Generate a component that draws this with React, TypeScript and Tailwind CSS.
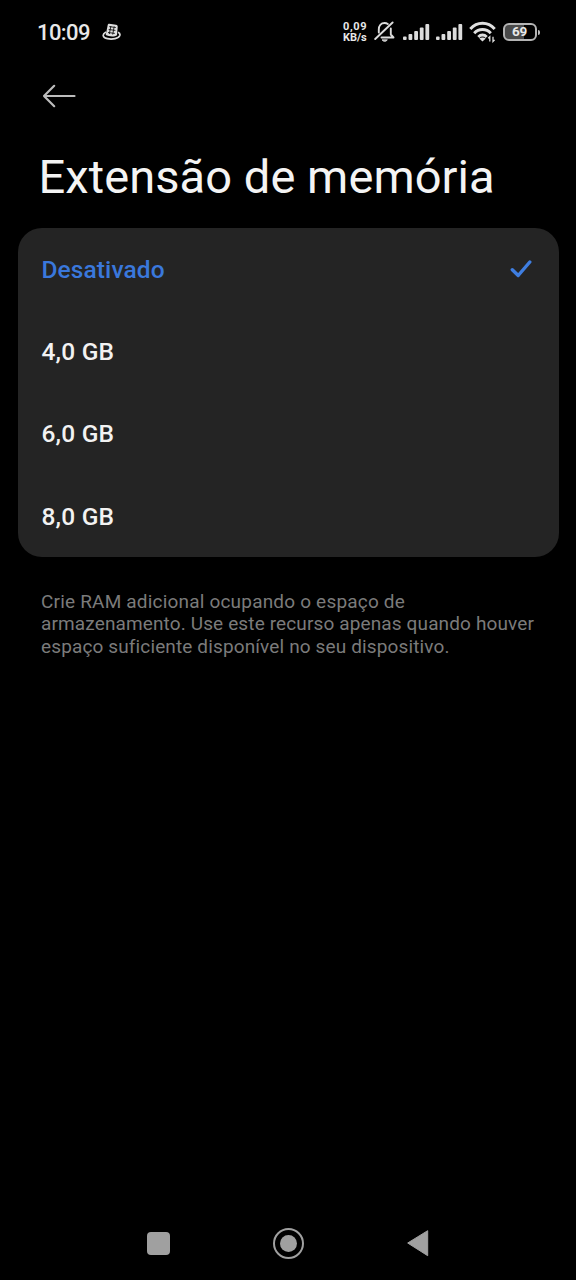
const OPTIONS = ["Desativado", "4,0 GB", "6,0 GB", "8,0 GB"];

function Signal() {
  return (
    <svg width="27" height="18" viewBox="0 0 27 18" fill="#dcdcdc">
      <rect x="0" y="13.500" width="3.600" height="3.500" rx="1" />
      <rect x="5.500" y="11" width="3.800" height="6" rx="1" />
      <rect x="11.200" y="8" width="3.800" height="9" rx="1" />
      <rect x="16.800" y="4.600" width="3.800" height="12.400" rx="1" />
      <rect x="22.400" y="1" width="3.800" height="16" rx="1" />
    </svg>
  );
}

function StatusBar() {
  return (
    <header className="flex h-16 items-center pl-[37px] text-[#e8e8e8]">
      <span className="w-[65px] pt-px text-[22px] leading-none font-medium tracking-[-0.6px]">10:09</span>
      <svg width="19" height="18" viewBox="0 0 19 18" fill="none">
        <path d="M4 9C-.3 11.500.5 14.600 5.500 15.700c5 1 11.200-.2 12.300-3.200.5-1.600-.3-2.700-1.800-3.300" stroke="#dedede" strokeWidth="1.700" />
        <path d="M7.300.8 14 1.800c1.300.3 1.900 1.200 1.700 2.400L15 12.300c-2.300 1.900-8.300 1.500-11.300-.2L5.700 2c.2-.8.700-1.200 1.600-1.200Z" fill="#dedede" />
        <path d="m7.300 3.600 6.500.9M6.700 6.500l6.700.9M6 9.500l6.800.9M8.900 3 7.300 11M12.200 3.500l-1.500 8" stroke="#111" strokeWidth="0.900" />
      </svg>
      <div className="ml-auto flex w-[233px] items-center">
        <div className="w-[31px] text-[11px] leading-[11px] font-bold">
          <div className="tracking-[0.6px]">0,09</div>
          <div>KB/s</div>
        </div>
        <svg width="22" height="24" viewBox="0 0 22 24" fill="none" stroke="#dcdcdc" strokeWidth="1.900" strokeLinecap="round" strokeLinejoin="round">
          <path d="M13.800 4C12.800 3.300 11.800 3 10.600 3 7 3 4.800 5.800 4.800 9.500V12.500M7.500 17.500H19.500l-2.700-3V8.500M18.600 2.500 1.200 19" />
          <path d="M8.300 20.200c.9 1.500 3.900 1.500 4.800 0Z" fill="#dcdcdc" strokeWidth="1" />
        </svg>
        <div className="ml-[7px] flex gap-[5.500px]">
          <Signal />
          <Signal />
        </div>
        <svg className="ml-[6px]" width="28" height="22" viewBox="0 0 28 22" fill="none" stroke="#e0e0e0" strokeWidth="2.900">
          <path d="M1.300 8C8 .3 19 .3 25.700 8M5.200 12.200c4.600-5 12-5 16.600 0M9.300 15.900c2.400-2.500 6-2.500 8.400 0" />
          <path d="m13.500 20.500-3.200-3c1.700-1.500 4.700-1.500 6.400 0Z" fill="#e0e0e0" stroke="none" />
          <path d="M20.800 20.500v-4.800l-1.600 1.600M24 15.700v4.800l1.600-1.600" strokeWidth="1.300" />
        </svg>
        <div className="ml-[6px] flex h-[18px] w-[34px] items-center justify-center rounded-[6px] border-2 border-[#b4b4b4] bg-linear-to-r from-[#4a4a4a] from-65% to-black to-65% text-[13.500px] leading-none font-bold tracking-[-0.3px]">
          69
        </div>
        <div className="ml-px h-[5px] w-[2px] rounded-r-sm bg-[#bdbdbd]" />
      </div>
    </header>
  );
}

export default function App() {
  return (
    <div className="flex h-[1280px] w-[576px] flex-col overflow-hidden bg-black font-['Roboto',sans-serif]">
      <StatusBar />
      <button aria-label="Voltar" className="flex h-16 items-center pl-[42px]">
        <svg width="34" height="24" viewBox="0 0 34 24" fill="none" stroke="#bcbcbc" strokeWidth="2.200" strokeLinecap="round" strokeLinejoin="round">
          <path d="M32.500 12H2M12.200 1.800 2 12l10.200 10.200" />
        </svg>
      </button>
      <h1 className="flex h-[100px] items-center pb-[4px] pl-[38.500px] text-[47px] leading-none tracking-[0.08px] whitespace-nowrap text-[#f4f4f4]">
        Extensão de memória
      </h1>
      <ul className="mr-[17px] ml-[18px] flex h-[329px] flex-col rounded-[24px] bg-[#242424]">
        {OPTIONS.map((option, i) => (
          <li
            key={option}
            className={`flex flex-1 items-center justify-between pr-[27.500px] pl-[23.500px] text-[24.500px] font-medium ${i === 0 ? "text-[#3a78dc]" : "text-[#f2f2f2]"}`}
          >
            <span className={i === 0 ? "pt-0.5 tracking-[0.1px]" : "pt-0.5 tracking-[0.2px]"}>{option}</span>
            {i === 0 && (
              <svg width="22" height="18" viewBox="0 0 22 18" fill="none" stroke="#3f7ee0" strokeWidth="3.400" strokeLinecap="round" strokeLinejoin="round">
                <path d="m2.300 9.700 5.900 5.800L19.800 2" />
              </svg>
            )}
          </li>
        ))}
      </ul>
      <p className="mt-[33.500px] ml-[41px] text-[19px] leading-[22.500px] tracking-[0.13px] whitespace-nowrap text-[#7b7b7b]">
        <span className="tracking-[0.19px]">Crie RAM adicional ocupando o espaço de</span>
        <br />
        armazenamento. Use este recurso apenas quando houver
        <br />
        espaço suficiente disponível no seu dispositivo.
      </p>
      <nav className="mt-auto flex h-[74px] items-center pl-[147px]">
        <div className="h-[23px] w-[23px] rounded-[4px] bg-[#a0a0a0]" />
        <div className="ml-[103px] flex size-[31px] items-center justify-center rounded-full border-2 border-[#a0a0a0]">
          <div className="size-[17px] rounded-full bg-[#a0a0a0]" />
        </div>
        <svg className="ml-[103px]" width="22" height="27" viewBox="0 0 22 27" fill="#a0a0a0" stroke="#a0a0a0" strokeLinejoin="round">
          <path d="M.7 13 20.700.7v25Z" />
        </svg>
      </nav>
    </div>
  );
}
